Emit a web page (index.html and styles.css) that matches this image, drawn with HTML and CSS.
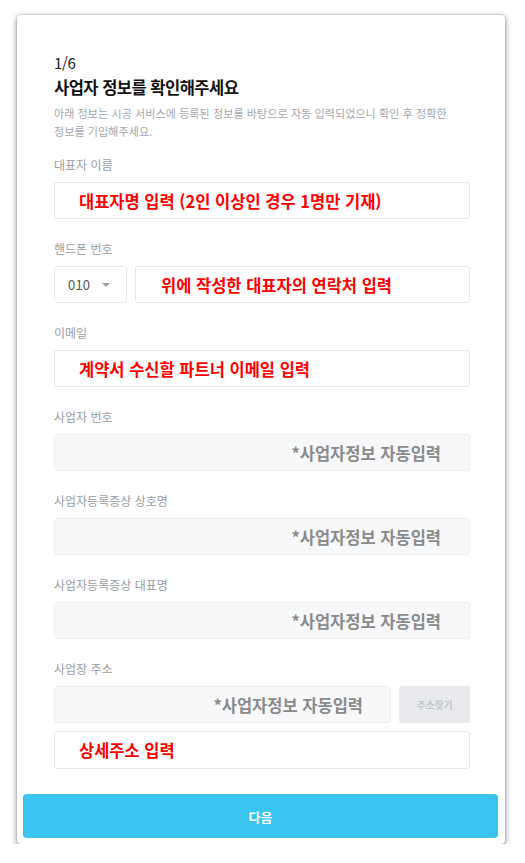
FILE: index.html
```html
<!DOCTYPE html>
<html lang="ko">
<head>
<meta charset="utf-8">
<title>사업자 정보 확인</title>
<link rel="stylesheet" href="styles.css">
</head>
<body>
<div class="card">
  <div class="content">
    <div class="step">1/6</div>
    <h1 class="title">사업자 정보를 확인해주세요</h1>
    <p class="desc">아래 정보는 시공 서비스에 등록된 정보를 바탕으로 자동 입력되었으니 확인 후 정확한 정보를 기입해주세요.</p>

    <div class="field">
      <div class="label">대표자 이름</div>
      <div class="input"><span class="red">대표자명 입력 (2인 이상인 경우 1명만 기재)</span></div>
    </div>

    <div class="field">
      <div class="label">핸드폰 번호</div>
      <div class="row">
        <div class="input select"><span class="code">010</span><span class="caret"></span></div>
        <div class="input grow phone"><span class="red">위에 작성한 대표자의 연락처 입력</span></div>
      </div>
    </div>

    <div class="field">
      <div class="label">이메일</div>
      <div class="input"><span class="red">계약서 수신할 파트너 이메일 입력</span></div>
    </div>

    <div class="field">
      <div class="label">사업자 번호</div>
      <div class="input auto"><span class="autotext">*사업자정보 자동입력</span></div>
    </div>

    <div class="field">
      <div class="label">사업자등록증상 상호명</div>
      <div class="input auto"><span class="autotext">*사업자정보 자동입력</span></div>
    </div>

    <div class="field">
      <div class="label">사업자등록증상 대표명</div>
      <div class="input auto"><span class="autotext">*사업자정보 자동입력</span></div>
    </div>

    <div class="field last">
      <div class="label">사업장 주소</div>
      <div class="row">
        <div class="input auto grow addr"><span class="autotext">*사업자정보 자동입력</span></div>
        <div class="findbtn">주소찾기</div>
      </div>
      <div class="input detail"><span class="red">상세주소 입력</span></div>
    </div>
  </div>
  <div class="next">다음</div>
</div>
</body>
</html>
```
FILE: styles.css
```css
* { box-sizing: border-box; }
html, body { margin: 0; padding: 0; background: #ffffff; }
body {
  font-family: "Noto Sans CJK KR", "Noto Sans", sans-serif;
  color: #222;
}
.card {
  margin: 15px 0 0 17px;
  width: 488px;
  height: 829px;
  background: #fff;
  border-radius: 4px;
  box-shadow: 0 2px 6px rgba(0,0,0,0.45), 0 0 2px rgba(0,0,0,0.3);
  padding: 38px 0 6px;
  display: flex;
  flex-direction: column;
}
.content {
  padding: 0 35px 0 37px;
  flex: 1;
}
.step {
  font-size: 15px;
  line-height: 20px;
  color: #222;
  letter-spacing: -0.3px;
}
.title {
  margin: 3px 0 0;
  font-size: 16.5px;
  line-height: 22px;
  font-weight: 700;
  letter-spacing: -0.5px;
  color: #111;
}
.desc {
  margin: 6px 0 0;
  font-size: 11px;
  line-height: 18px;
  color: #a3a7ab;
  letter-spacing: 0.1px;
  max-width: 408px;
  word-break: keep-all;
}
.field { margin-top: 16px; }
.field + .field { margin-top: 21px; }
.label {
  font-size: 12px;
  line-height: 18px;
  color: #999da2;
  letter-spacing: 0;
  margin-bottom: 8px;
}
.row { display: flex; gap: 8px; }
.grow { flex: 1; }
.input {
  height: 37px;
  border: 1px solid #e4e6ea;
  border-radius: 3px;
  background: #fff;
  display: flex;
  align-items: center;
  padding-left: 24px;
}
.phone { padding-left: 25px; }
.red {
  color: #ff0000;
  font-weight: 700;
  font-size: 16.5px;
  letter-spacing: 0;
  white-space: nowrap;
}
.select {
  width: 73px;
  padding-left: 13px;
  gap: 12px;
}
.code { font-size: 13px; color: #555; letter-spacing: 0.2px; }
.caret {
  width: 0; height: 0;
  border-left: 4px solid transparent;
  border-right: 4px solid transparent;
  border-top: 4px solid #9a9ea3;
}
.auto {
  background: #f7f8fa;
  border-color: #eceef1;
  justify-content: flex-end;
  padding-right: 28px;
}
.autotext {
  color: #8a8a8a;
  font-weight: 700;
  font-size: 16.5px;
  letter-spacing: 0;
  white-space: nowrap;
}
.addr { padding-right: 27px; }
.findbtn {
  width: 71px;
  height: 37px;
  border-radius: 3px;
  background: #e8eaed;
  color: #c4c8cc;
  font-size: 10px;
  font-weight: 700;
  display: flex;
  align-items: center;
  justify-content: center;
  letter-spacing: -0.3px;
}
.detail { margin-top: 8px; height: 38px; }
.next {
  margin: 0 7px 0 6px;
  height: 44px;
  background: #38c4ef;
  border-radius: 4px;
  color: #fff;
  font-weight: 700;
  font-size: 13px;
  display: flex;
  align-items: center;
  justify-content: center;
}
```
